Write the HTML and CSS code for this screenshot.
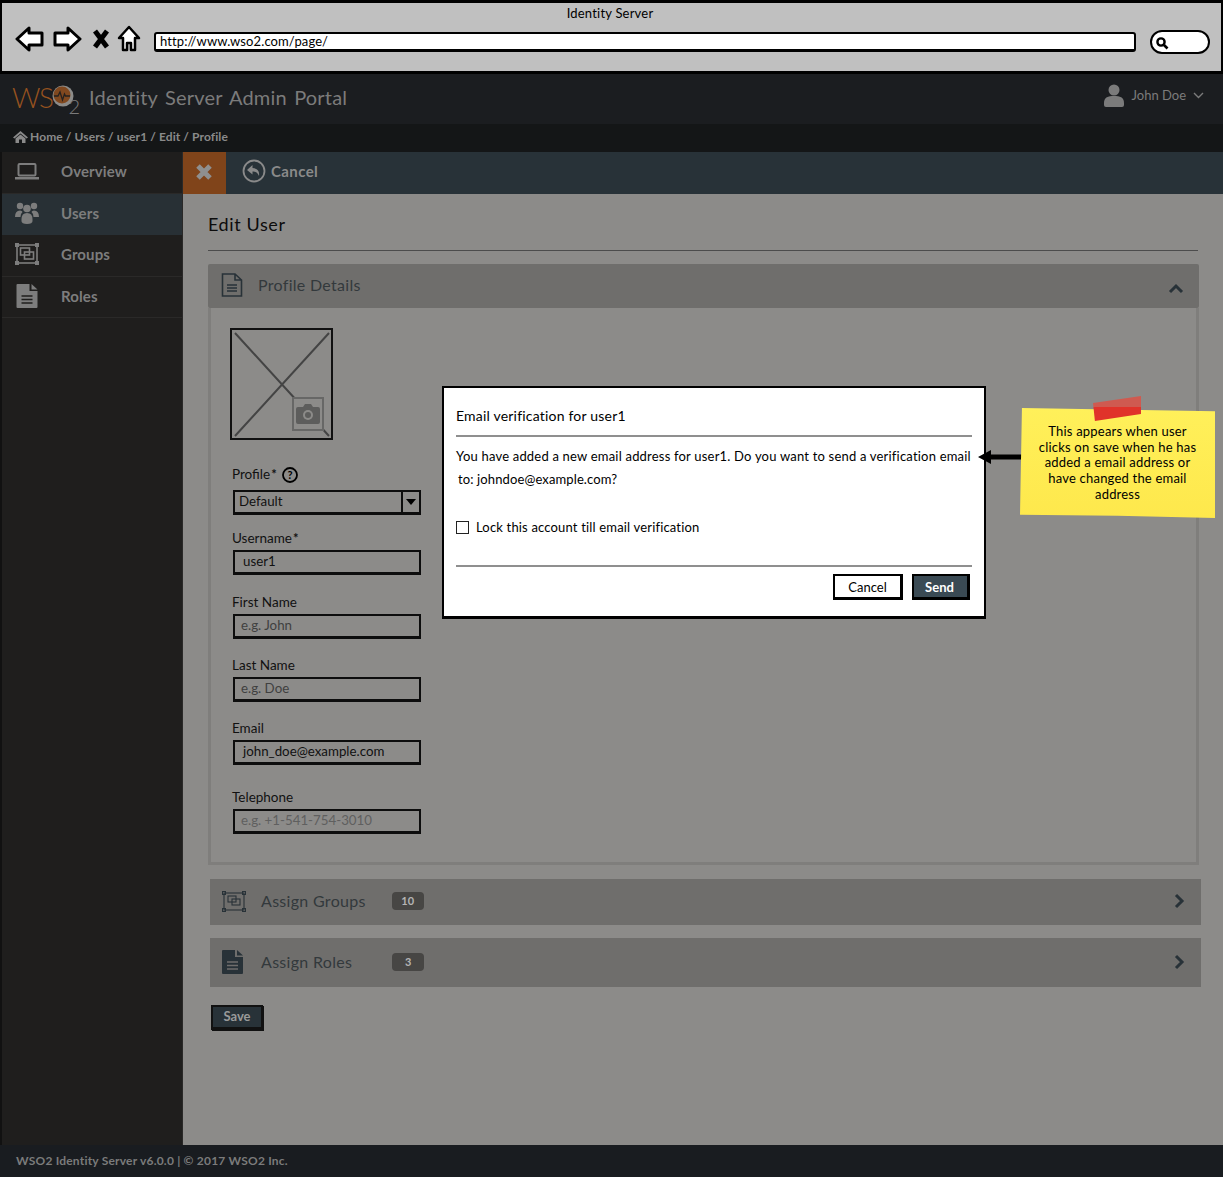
FILE: index.html
```html
<!DOCTYPE html>
<html lang="en">
<head>
    <meta charset="UTF-8">
    <title>Identity Server</title>
    <link rel="stylesheet" href="styles.css">
</head>
<body>
<div class="window">
    <div class="browser">
        <div class="browser-title">Identity Server</div>
        <div class="browser-bar">
            <svg class="nav-icon" width="30" height="28" viewBox="0 0 30 28"><path d="M2 14 L14 3 V8 H27 V20 H14 V25 Z" fill="#fff" stroke="#000" stroke-width="3" stroke-linejoin="round"/></svg>
            <svg class="nav-icon" width="30" height="28" viewBox="0 0 30 28"><path d="M28 14 L16 3 V8 H3 V20 H16 V25 Z" fill="#fff" stroke="#000" stroke-width="3" stroke-linejoin="round"/></svg>
            <svg class="nav-icon nav-stop" width="18" height="22" viewBox="0 0 18 22"><path d="M3 3 L15 19 M15 3 L3 19" fill="none" stroke="#000" stroke-width="5"/></svg>
            <svg class="nav-icon" width="24" height="28" viewBox="0 0 24 28"><path d="M12 2 L22 13 H18 V25 H14 V18 H10 V25 H6 V13 H2 Z" fill="#fff" stroke="#000" stroke-width="2.5" stroke-linejoin="round"/></svg>
            <div class="url-box">http://www.wso2.com/page/</div>
            <div class="search-box">
                <svg width="14" height="14" viewBox="0 0 14 14"><circle cx="6" cy="6" r="3.6" fill="none" stroke="#000" stroke-width="2.4"/><path d="M9 9 L12.5 12.5" stroke="#000" stroke-width="2.6"/></svg>
            </div>
        </div>
    </div>

    <header class="topbar">
        <div class="logo">
            <span class="logo-ws">WS</span>
            <svg class="logo-o" width="22" height="22" viewBox="0 0 22 22"><circle cx="11" cy="11" r="10.5" fill="#8c8b89"/><circle cx="10" cy="10" r="8.5" fill="#80481f"/><path d="M2 11 H6 L8 7 L10.5 15 L12.5 9 L13.5 11 H18" fill="none" stroke="#24211f" stroke-width="1.3"/></svg>
            <span class="logo-two">2</span>
        </div>
        <div class="app-title">Identity Server Admin Portal</div>
        <div class="user-menu">
            <svg width="20" height="23" viewBox="0 0 20 23"><circle cx="10" cy="6" r="5.5" fill="#7b7b7b"/><path d="M0 19 C0 13 4 12 10 12 C16 12 20 13 20 19 V21 Q20 23 18 23 H2 Q0 23 0 21 Z" fill="#7b7b7b"/></svg>
            <span>John Doe</span>
            <svg width="11" height="7" viewBox="0 0 11 7"><path d="M1 1 L5.5 5.5 L10 1" fill="none" stroke="#7b7b7b" stroke-width="1.4"/></svg>
        </div>
    </header>

    <div class="crumbs">
        <svg width="15" height="12" viewBox="0 0 15 12"><path d="M7.5 0 L15 6.5 L13.5 7.5 L7.5 2.5 L1.5 7.5 L0 6.5 Z M2.5 7.5 L7.5 3.5 L12.5 7.5 V12 H9 V8.5 H6 V12 H2.5 Z" fill="#8a8a8a"/></svg>
        <span>Home / Users / user1 / Edit / Profile</span>
    </div>

    <div class="workspace">
        <nav class="sidebar">
            <a class="nav-item">
                <svg width="24" height="17" viewBox="0 0 24 17"><rect x="3.5" y="1" width="17" height="11.5" rx="1" fill="none" stroke="#7d7d7d" stroke-width="2"/><rect x="0" y="14" width="24" height="2.5" fill="#7d7d7d"/></svg>
                <span>Overview</span>
            </a>
            <a class="nav-item active">
                <svg width="24" height="22" viewBox="0 0 24 22"><g fill="#7d7d7d"><circle cx="5" cy="4" r="3.2"/><circle cx="19" cy="4" r="3.2"/><circle cx="12" cy="6.5" r="3.8"/><path d="M0 15 Q0 8.5 5 8.5 Q7 8.5 7.5 10 Q5.5 11.5 5.5 15 Z M24 15 Q24 8.5 19 8.5 Q17 8.5 16.5 10 Q18.5 11.5 18.5 15 Z"/><path d="M6.5 17 Q6.5 11 12 11 Q17.5 11 17.5 17 V19 Q17.5 22 12 22 Q6.5 22 6.5 19 Z"/></g></svg>
                <span>Users</span>
            </a>
            <a class="nav-item">
                <svg width="24" height="22" viewBox="0 0 24 22"><g fill="none" stroke="#7d7d7d" stroke-width="1.6"><rect x="2" y="2" width="20" height="18"/><rect x="5.5" y="5" width="9" height="7"/><rect x="9.5" y="9" width="9" height="7"/></g><g fill="#7d7d7d"><rect width="4" height="4"/><rect x="20" width="4" height="4"/><rect y="18" width="4" height="4"/><rect x="20" y="18" width="4" height="4"/></g></svg>
                <span>Groups</span>
            </a>
            <a class="nav-item">
                <svg width="21" height="24" viewBox="0 0 21 24"><path d="M0 1 Q0 0 1 0 H13 V7 H21 V23 Q21 24 20 24 H1 Q0 24 0 23 Z M15 0 L21 5.5 H15 Z" fill="#7d7d7d"/><path d="M5 12 H16 M5 15.5 H16 M5 19 H16" stroke="#1f1e1d" stroke-width="1.5"/></svg>
                <span>Roles</span>
            </a>
        </nav>

        <div class="content">
            <div class="toolbar">
                <button class="btn-close">
                    <svg width="18" height="18" viewBox="0 0 18 18"><path d="M3 3 L15 15 M15 3 L3 15" stroke="#8f8f8f" stroke-width="5"/></svg>
                </button>
                <div class="btn-cancel-top">
                    <svg width="24" height="24" viewBox="0 0 24 24"><circle cx="12" cy="12" r="10.5" fill="none" stroke="#8a8a8a" stroke-width="1.8"/><path d="M10.5 6 L5 11 L10.5 15.5 V12.5 Q15 12 17 17 Q18 9.5 10.5 9 Z" fill="#8a8a8a"/></svg>
                    <span>Cancel</span>
                </div>
            </div>

            <main class="page">
                <h1 class="page-title">Edit User</h1>

                <section class="panel">
                    <div class="panel-head">
                        <svg width="22" height="24" viewBox="0 0 22 24"><path d="M1.5 1 H14 L20.5 7 V23 H1.5 Z M14 1 V7 H20.5" fill="none" stroke="#283238" stroke-width="1.6"/><path d="M6 12 H16 M6 15 H16 M6 18 H16" stroke="#283238" stroke-width="1.3"/></svg>
                        <span class="panel-name">Profile Details</span>
                        <svg class="chevron" width="16" height="11" viewBox="0 0 16 11"><path d="M2 9 L8 3 L14 9" fill="none" stroke="#283238" stroke-width="3"/></svg>
                    </div>
                    <div class="panel-body">
                        <div class="avatar">
                            <svg width="99" height="108" viewBox="0 0 99 108"><path d="M3 3 L97 106 M97 3 L3 106" stroke="#444" stroke-width="2"/></svg>
                            <div class="camera">
                                <svg width="24" height="20" viewBox="0 0 24 20"><path d="M2 3 H7 L9 0 H15 L17 3 H22 Q24 3 24 5 V18 Q24 20 22 20 H2 Q0 20 0 18 V5 Q0 3 2 3 Z" fill="#5d5d5c"/><circle cx="12" cy="11" r="5" fill="#8c8b89"/><circle cx="12" cy="11" r="3" fill="#5d5d5c"/></svg>
                            </div>
                        </div>

                        <div class="field field-profile">
                            <label class="field-label">Profile<sup>*</sup>
                                <svg class="help" width="16" height="16" viewBox="0 0 16 16"><circle cx="8" cy="8" r="7" fill="none" stroke="#000" stroke-width="1.8"/><text x="8" y="12" class="help-mark">?</text></svg>
                            </label>
                            <div class="input select">Default<span class="caret"></span></div>
                        </div>
                        <div class="field field-username">
                            <label class="field-label">Username<sup>*</sup></label>
                            <div class="input">user1</div>
                        </div>
                        <div class="field field-first">
                            <label class="field-label">First Name</label>
                            <div class="input hint">e.g. John</div>
                        </div>
                        <div class="field">
                            <label class="field-label">Last Name</label>
                            <div class="input hint">e.g. Doe</div>
                        </div>
                        <div class="field">
                            <label class="field-label">Email</label>
                            <div class="input">john_doe@example.com</div>
                        </div>
                        <div class="field field-phone">
                            <label class="field-label">Telephone</label>
                            <div class="input hint pale">e.g. +1-541-754-3010</div>
                        </div>
                    </div>
                </section>

                <section class="assign assign-groups">
                    <svg width="24" height="21" viewBox="0 0 24 21"><g fill="none" stroke="#283238" stroke-width="1.1"><rect x="2" y="2" width="20" height="17"/><rect x="6" y="5" width="8" height="6"/><rect x="10" y="8" width="8" height="6"/></g><g fill="none" stroke="#283238"><rect x=".5" y=".5" width="3" height="3"/><rect x="20.5" y=".5" width="3" height="3"/><rect x=".5" y="17.5" width="3" height="3"/><rect x="20.5" y="17.5" width="3" height="3"/></g></svg>
                    <span class="assign-name">Assign Groups</span>
                    <span class="count">10</span>
                    <svg class="chevron" width="11" height="16" viewBox="0 0 11 16"><path d="M2 2 L8 8 L2 14" fill="none" stroke="#283238" stroke-width="3"/></svg>
                </section>
                <section class="assign assign-roles">
                    <svg width="21" height="24" viewBox="0 0 21 24"><path d="M0 1 Q0 0 1 0 H13 V7 H21 V23 Q21 24 20 24 H1 Q0 24 0 23 Z M15 0 L21 5.5 H15 Z" fill="#283238"/><path d="M5 12 H16 M5 15.5 H16 M5 19 H16" stroke="#6f6e6c" stroke-width="1.5"/></svg>
                    <span class="assign-name">Assign Roles</span>
                    <span class="count">3</span>
                    <svg class="chevron" width="11" height="16" viewBox="0 0 11 16"><path d="M2 2 L8 8 L2 14" fill="none" stroke="#283238" stroke-width="3"/></svg>
                </section>

                <button class="btn-save">Save</button>
            </main>
        </div>
    </div>

    <footer class="footer">WSO2 Identity Server v6.0.0 | © 2017 WSO2 Inc.</footer>

    <div class="modal">
        <div class="modal-title">Email verification for user1</div>
        <div class="modal-body">
            <p class="modal-line">You have added a new email address for user1. Do you want to send a verification email</p>
            <p class="modal-line indent">to: johndoe@example.com?</p>
            <label class="lock"><span class="checkbox"></span>Lock this account till email verification</label>
        </div>
        <div class="modal-foot">
            <button class="btn-light">Cancel</button>
            <button class="btn-dark">Send</button>
        </div>
    </div>

    <svg class="arrow" width="46" height="16" viewBox="0 0 46 16"><path d="M0 8 L13 1 V5.5 H45 V10.5 H13 V15 Z" fill="#000"/></svg>

    <div class="sticky">
        <div class="tape"></div>
        This appears when user clicks on save when he has added a email address or have changed the email address
    </div>
</div>
</body>
</html>
```

FILE: styles.css
```css
* {
    box-sizing: border-box;
    margin: 0;
    padding: 0;
}

body {
    font-family: "Lato", "Noto Sans", sans-serif;
    font-size: 14px;
    color: #000;
    background: #8c8b89;
}

.window {
    position: relative;
    width: 1223px;
    height: 1177px;
    display: flex;
    flex-direction: column;
    overflow: hidden;
}

/* Browser frame */
.browser {
    height: 74px;
    background: #c0c0c0;
    border: 3px solid #000;
    border-left-width: 2px;
    border-right-width: 2px;
}

.browser-title {
    text-align: center;
    font-size: 13px;
    line-height: 15px;
    padding: 3px 3px 0 0;
    letter-spacing: 0.2px;
}

.browser-bar {
    display: flex;
    align-items: center;
    padding: 2px 11px 0 13px;
    gap: 7px;
}

.nav-icon {
    flex: none;
}

.nav-stop {
    margin-left: 3px;
}

.url-box {
    flex: 1;
    height: 20px;
    margin: 7px 0 0 6px;
    background: #fff;
    border: 2px solid #000;
    border-bottom-width: 3px;
    border-radius: 3px;
    font-size: 13px;
    line-height: 15px;
    padding-left: 4px;
    letter-spacing: 0.1px;
}

.search-box {
    width: 60px;
    height: 24px;
    margin: 7px 0 0 7px;
    background: #fff;
    border: 2px solid #000;
    border-radius: 12px;
    padding: 4px 0 0 3px;
    display: flex;
}

/* Header */
.topbar {
    height: 50px;
    background: #1b1d20;
    display: flex;
    align-items: center;
    padding: 0 19px 4px 12px;
    color: #7b7b7b;
}

.logo {
    display: flex;
    align-items: center;
    position: relative;
    width: 77px;
}

.logo-ws {
    font-size: 28px;
    font-weight: 300;
    letter-spacing: -1.4px;
    color: #96521f;
}

.logo-o {
    margin: -2px 0 0 -1px;
}

.logo-two {
    font-size: 20px;
    font-weight: 300;
    margin: 18px 0 0 -5px;
    color: #7b7b7b;
    line-height: 20px;
}

.app-title {
    font-size: 20px;
    letter-spacing: 0.2px;
    word-spacing: 2px;
    flex: 1;
}

.user-menu {
    display: flex;
    align-items: center;
    gap: 7px;
    font-size: 13px;
    margin-bottom: 4px;
}

.user-menu svg:first-child {
    margin-right: 1px;
}

.crumbs {
    height: 28px;
    background: #141617;
    color: #8a8a8a;
    display: flex;
    align-items: center;
    gap: 2px;
    padding: 0 0 3px 13px;
    font-size: 12px;
    font-weight: 700;
    letter-spacing: 0.1px;
}

/* Main area */
.workspace {
    flex: 1;
    display: flex;
    min-height: 0;
}

.sidebar {
    width: 183px;
    flex: none;
    background: #1f1e1d;
    border-left: 2px solid #111;
    border-right: 1px solid #2a2928;
}

.nav-item {
    height: 41.5px;
    display: flex;
    align-items: center;
    color: #7d7d7d;
    font-size: 15px;
    font-weight: 700;
    padding: 0 0 2px 13px;
    border-bottom: 1px solid #2a2928;
    letter-spacing: 0.1px;
}

.nav-item svg {
    width: 24px;
}

.nav-item span {
    margin-left: 22px;
}

.nav-item.active {
    background: #283035;
    border-bottom-color: #283035;
}

.content {
    flex: 1;
    display: flex;
    flex-direction: column;
    min-width: 0;
}

.toolbar {
    height: 42px;
    background: #283238;
    display: flex;
    align-items: center;
    color: #8a8a8a;
    font-size: 15px;
    font-weight: 700;
    letter-spacing: 0.4px;
}

.btn-close {
    width: 43px;
    height: 42px;
    background: #80441a;
    border: 0;
    display: flex;
    align-items: center;
    justify-content: center;
    padding: 0 2px 2px 0;
}

.btn-cancel-top {
    display: flex;
    align-items: center;
    gap: 5px;
    margin: 0 0 4px 16px;
}

.page {
    flex: 1;
    padding: 0 25px;
    background: #8c8b89;
}

.page-title {
    height: 57px;
    padding-top: 19px;
    font-size: 18px;
    line-height: 22px;
    font-weight: 400;
    letter-spacing: 0.6px;
    color: #0c0c0c;
    border-bottom: 1px solid #4c4c4c;
}

.panel {
    margin-top: 13px;
    width: 991px;
}

.panel-head {
    height: 44px;
    background: #6f6e6c;
    display: flex;
    align-items: center;
    padding: 0 15px 3px 13px;
    border-radius: 2px;
}

.panel-name,
.assign-name {
    font-size: 16px;
    letter-spacing: 0.3px;
    color: #33393c;
    flex: none;
}

.panel-name {
    margin-left: 15px;
}

.panel-head .chevron,
.assign .chevron {
    margin-left: auto;
}

.panel-head .chevron {
    margin-top: 7px;
}

.panel-body {
    height: 557px;
    border: 3px solid #7f7e7c;
    border-top: 0;
    padding: 20px 0 0 19px;
}

.avatar {
    position: relative;
    width: 103px;
    height: 112px;
    border: 2px solid #111;
}

.avatar > svg {
    display: block;
}

.camera {
    position: absolute;
    left: 60px;
    top: 67px;
    width: 32px;
    height: 34px;
    background: #8c8b89;
    border: 2px solid #676766;
    display: flex;
    align-items: center;
    justify-content: center;
}

.field {
    width: 188px;
    margin: 0 0 0 3px;
    padding-top: 20px;
}

.field-profile {
    padding-top: 28px;
}

.field-username {
    padding-top: 17px;
}

.field-first {
    padding-top: 21px;
}

.field-phone {
    padding-top: 26px;
}

.field-label {
    display: flex;
    align-items: flex-start;
    height: 18px;
    margin-left: -1px;
    font-size: 13.5px;
    line-height: 13px;
    color: #111;
}

.field-label sup {
    font-size: 13px;
    line-height: 13px;
    font-weight: 700;
    margin-left: 1px;
}

.help {
    margin: -1px 0 0 5px;
}

.help-mark {
    font-size: 11px;
    font-weight: 700;
    text-anchor: middle;
}

.field-profile .field-label {
    height: 22px;
}

.input {
    height: 25px;
    border: 2px solid #0d0d0d;
    border-bottom-width: 3px;
    font-size: 13.3px;
    line-height: 19px;
    padding-left: 8px;
    color: #111;
}

.select {
    position: relative;
    padding-left: 4px;
}

.caret {
    position: absolute;
    right: 0;
    top: 0;
    width: 18px;
    height: 20px;
    border-left: 2px solid #0d0d0d;
}

.caret::after {
    content: "";
    position: absolute;
    left: 3px;
    top: 7px;
    border: 5px solid transparent;
    border-top: 6px solid #000;
    border-bottom: 0;
}

.hint {
    color: #404040;
    padding-left: 6px;
    line-height: 18px;
}

.hint.pale {
    color: #5f5f5f;
}

.assign {
    width: 991px;
    margin-left: 2px;
    background: #6f6e6c;
    display: flex;
    align-items: center;
    padding: 0 16px 0 12px;
}

.assign-groups {
    height: 46px;
    margin-top: 14px;
    padding-bottom: 2px;
}

.assign-roles {
    height: 49px;
    margin-top: 13px;
    padding-bottom: 1px;
}

.assign-name {
    margin: 0 0 2px 15px;
}

.assign-roles .assign-name {
    margin-left: 18px;
}

.count {
    margin-left: 26px;
    width: 32px;
    height: 18px;
    border-radius: 4px;
    background: #474644;
    color: #b4b4b4;
    font-size: 11px;
    font-weight: 700;
    text-align: center;
    line-height: 17px;
}

.assign-roles .count {
    margin-left: 40px;
}

.btn-save {
    display: block;
    margin: 18px 0 0 3px;
    width: 52px;
    height: 25px;
    background: #283238;
    border: 2px solid #111;
    border-bottom-width: 3px;
    box-shadow: 1px 1px 0 #111;
    color: #9a9a9a;
    font-family: inherit;
    font-size: 13px;
    font-weight: 700;
    padding-bottom: 2px;
}

.footer {
    height: 32px;
    background: #191c20;
    color: #7b7b7b;
    font-size: 12px;
    font-weight: 700;
    letter-spacing: 0.2px;
    line-height: 31px;
    padding-left: 16px;
}

/* Modal that lies over the dimmed page */
.modal {
    position: absolute;
    left: 442px;
    top: 386px;
    width: 544px;
    height: 233px;
    background: #fff;
    border: 2px solid #000;
    border-bottom-width: 3px;
    padding: 0 12px;
}

.modal-title {
    height: 49px;
    padding-top: 19px;
    font-size: 14px;
    line-height: 17px;
    letter-spacing: 0.2px;
    border-bottom: 2px solid #8f8f8f;
}

.modal-body {
    height: 130px;
    border-bottom: 2px solid #8f8f8f;
}

.modal-line {
    font-size: 13px;
    line-height: 17px;
    padding-top: 11px;
    white-space: nowrap;
    letter-spacing: 0.2px;
}

.modal-line.indent {
    padding: 6px 0 0 2px;
    letter-spacing: 0.12px;
}

.lock {
    display: flex;
    align-items: center;
    gap: 7px;
    margin-top: 31px;
    font-size: 13px;
    line-height: 17px;
    letter-spacing: 0.17px;
}

.checkbox {
    width: 13px;
    height: 13px;
    border: 1.5px solid #222;
}

.modal-foot {
    display: flex;
    justify-content: flex-end;
    gap: 9px;
    padding: 7px 2px 0 0;
}

.btn-light,
.btn-dark {
    height: 26px;
    font-family: inherit;
    font-size: 13px;
    border: 2px solid #000;
    border-right-width: 3px;
    border-bottom-width: 3px;
}

.btn-light {
    width: 70px;
    background: #fff;
}

.btn-dark {
    width: 58px;
    background: #3a4a54;
    color: #fff;
    font-weight: 700;
    padding-right: 2px;
}

.arrow {
    position: absolute;
    left: 978px;
    top: 449px;
}

.sticky {
    position: absolute;
    z-index: 0;
    left: 1020px;
    top: 408px;
    width: 195px;
    height: 110px;
    padding: 16px 14px 0;
    text-align: center;
    font-size: 13px;
    line-height: 15.7px;
    letter-spacing: 0.2px;
}

.sticky::before {
    content: "";
    position: absolute;
    z-index: -1;
    left: 0;
    top: 0;
    right: 0;
    bottom: 0;
    background: linear-gradient(#fff05a, #fee84c);
    clip-path: polygon(1% 0, 100% 3%, 100% 100%, 50% 98%, 0 97%);
}

.tape {
    position: absolute;
    left: 73px;
    top: -12px;
    width: 48px;
    height: 25px;
    background: linear-gradient(#cf5a50 45%, #e0332a 46%);
    clip-path: polygon(0 28%, 100% 0, 100% 72%, 4% 100%);
}
```
